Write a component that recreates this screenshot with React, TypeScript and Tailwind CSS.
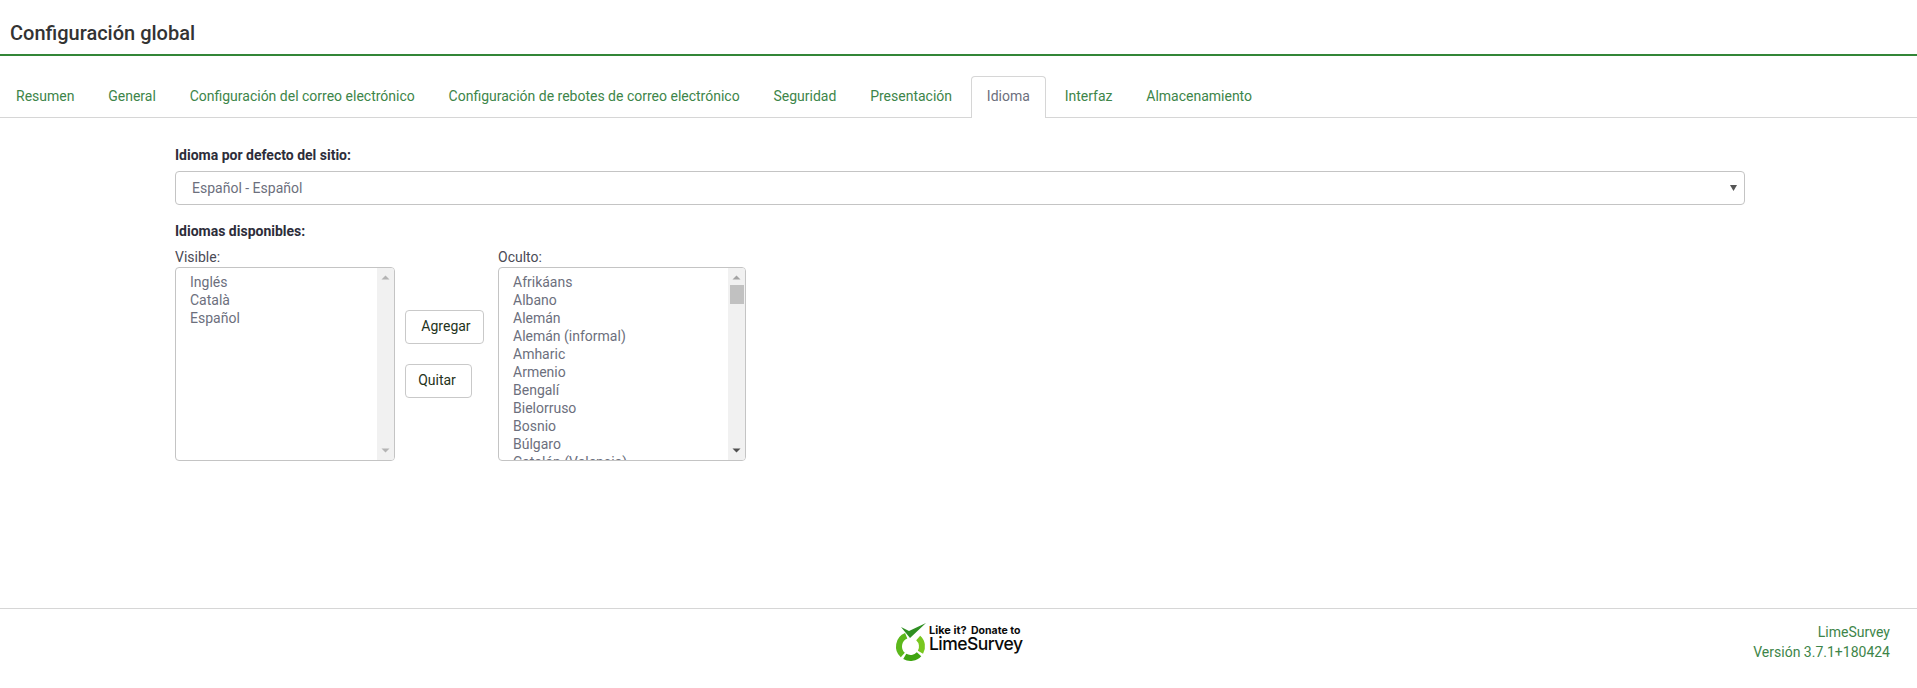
const TABS = [
  "Resumen",
  "General",
  "Configuración del correo electrónico",
  "Configuración de rebotes de correo electrónico",
  "Seguridad",
  "Presentación",
  "Idioma",
  "Interfaz",
  "Almacenamiento",
];

const VISIBLE = ["Inglés", "Català", "Español"];
const HIDDEN = [
  "Afrikáans",
  "Albano",
  "Alemán",
  "Alemán (informal)",
  "Amharic",
  "Armenio",
  "Bengalí",
  "Bielorruso",
  "Bosnio",
  "Búlgaro",
  "Catalán (Valencia)",
];

function ListBox({ items, width, thumb }: { items: string[]; width: string; thumb?: boolean }) {
  return (
    <div className={`${width} h-[194px] flex border border-[#c4c4c4] rounded-[4px] overflow-hidden bg-white`}>
      <div className="flex-1 pl-[14px] pt-[5px] text-[14px] leading-[18px] text-[#6c6f7d] overflow-hidden">
        {items.map((item) => (
          <div key={item}>{item}</div>
        ))}
      </div>
      <div className="w-[17px] bg-[#f1f1f1] flex flex-col items-center">
        <svg width="9" height="5" viewBox="0 0 9 5" className="mt-[7px] shrink-0">
          <path d="M4.5 0.5 L8.5 4.5 H0.5 Z" fill={thumb ? "#a3a3a3" : "#b4b4b4"} />
        </svg>
        {thumb && <div className="w-[14px] h-[19px] mt-[5px] bg-[#c1c1c1]" />}
        <svg width="9" height="5" viewBox="0 0 9 5" className="mt-auto mb-[7px] shrink-0">
          <path d="M0.5 0.5 H8.5 L4.5 4.5 Z" fill={thumb ? "#505050" : "#b4b4b4"} />
        </svg>
      </div>
    </div>
  );
}

// ring segment, angles clockwise from the top
function arc(from: number, to: number) {
  const r = 11.5;
  const pt = (a: number) => {
    const t = (a * Math.PI) / 180;
    return `${(17.5 + r * Math.sin(t)).toFixed(2)} ${(24.5 - r * Math.cos(t)).toFixed(2)}`;
  };
  return `M${pt(from)} A${r} ${r} 0 0 1 ${pt(to)}`;
}

function Logo() {
  return (
    <svg width="134" height="40" viewBox="0 0 134 40" className="block">
      <g fill="none" strokeWidth="6">
        <path d={arc(222, 338)} stroke="#5cb81c" />
        <path d={arc(132, 210)} stroke="#3fa511" />
        <path d={arc(42, 120)} stroke="#79c71f" />
      </g>
      <path d="M8 5 L16 9 L33 1 L17 16 Z" fill="#2f8f22" />
      <text x="36" y="12" fontFamily="Inter, sans-serif" fontSize="11" fontWeight="700" fill="#0a0a0a">
        Like it?
      </text>
      <text x="78" y="12" fontFamily="Inter, sans-serif" fontSize="10.500" fontWeight="700" fill="#0a0a0a">
        Donate to
      </text>
      <text x="36" y="28" fontFamily="Inter, sans-serif" fontSize="17.500" fontWeight="500" fill="#0a0a0a" textLength="94">
        LimeSurvey
      </text>
    </svg>
  );
}

export default function App() {
  return (
    <div className="min-h-screen flex flex-col bg-white text-[14px] font-['Roboto',sans-serif] text-[#6c6f7d]">
      <header className="h-[56px] pl-[10px] pt-[21px] border-b-2 border-[#328637]">
        <h1 className="text-[20px] leading-[24px] font-medium text-[#333333]">Configuración global</h1>
      </header>

      <nav className="mt-[20px] h-[42px] pl-[1px] flex border-b border-[#d6d6d6]">
        {TABS.map((tab) =>
          tab === "Idioma" ? (
            <span
              key={tab}
              className="h-[42px] mr-[3.8px] px-[15px] pt-[9px] leading-[20px] bg-white text-[#6c6f7d] border border-[#d6d6d6] border-b-0 rounded-t-[4px]"
            >
              {tab}
            </span>
          ) : (
            <a key={tab} href="#" className="mr-[3.8px] px-[15px] pt-[10px] leading-[20px] text-[#3d8549]">
              {tab}
            </a>
          ),
        )}
      </nav>

      <main className="flex-1 pl-[175px]">
        <label className="block mt-[27px] font-bold leading-[20px] text-[#2d2d3a]">Idioma por defecto del sitio:</label>
        <div className="w-[1570px] h-[34px] mt-[6px] pl-[16px] pr-[7px] flex items-center justify-between border border-[#c4c4c4] rounded-[4px]">
          <span>Español - Español</span>
          <svg width="7" height="6" viewBox="0 0 7 6">
            <path d="M0 0 H7 L3.500 6 Z" fill="#555555" />
          </svg>
        </div>

        <div className="mt-[16px] font-bold leading-[20px] text-[#2d2d3a]">Idiomas disponibles:</div>
        <div className="mt-[6px] flex">
          <div>
            <div className="leading-[20px] text-[#4a4a55]">Visible:</div>
            <ListBox items={VISIBLE} width="w-[220px]" />
          </div>
          <div className="ml-[10px] mt-[63px] flex flex-col items-start gap-[20px]">
            <button className="h-[34px] w-[79px] pl-[3px] pb-[1px] border border-[#c9c9c9] rounded-[4px] text-[#1f3320]">Agregar</button>
            <button className="h-[34px] w-[67px] pr-[3px] pb-[1px] border border-[#c9c9c9] rounded-[4px] text-[#1f3320]">Quitar</button>
          </div>
          <div className="ml-[14px]">
            <div className="leading-[20px] text-[#4a4a55]">Oculto:</div>
            <ListBox items={HIDDEN} width="w-[248px]" thumb />
          </div>
        </div>
      </main>

      <footer className="h-[80px] relative flex border-t border-[#d6d6d6]">
        <div className="absolute left-[893px] top-[13px]">
          <Logo />
        </div>
        <div className="ml-auto pr-[27px] pt-[13px] text-right leading-[20px] text-[#3d8549]">
          <div>LimeSurvey</div>
          <div>Versión 3.7.1+180424</div>
        </div>
      </footer>
    </div>
  );
}
